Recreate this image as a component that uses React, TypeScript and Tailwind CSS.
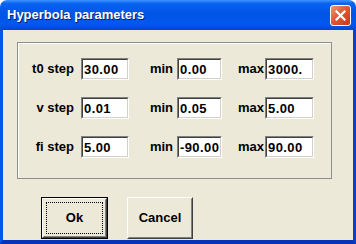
const rows = [
  { label: "t0 step", step: "30.00", min: "0.00", max: "3000." },
  { label: "v step", step: "0.01", min: "0.05", max: "5.00" },
  { label: "fi step", step: "5.00", min: "-90.00", max: "90.00" },
];

function Field({ value, w, ml }: { value: string; w: string; ml: string }) {
  return (
    <div
      className={`${w} ${ml} h-[22px] border border-t-[#808080] border-l-[#808080] border-b-white border-r-white`}
    >
      <div className="h-full border border-t-[#404040] border-l-[#404040] border-b-[#d4d0c8] border-r-[#d4d0c8] bg-white pl-[1px] flex items-center overflow-hidden whitespace-nowrap text-[13px] font-bold tracking-[0.4px] text-black leading-none">
        {value}
      </div>
    </div>
  );
}

export default function App() {
  return (
    <div className="w-[356px] h-[244px] bg-white flex flex-col font-['Liberation_Sans',Arial,sans-serif]">
      {/* Title bar */}
      <div className="h-[30px] shrink-0 rounded-t-[7px] bg-[linear-gradient(to_bottom,#3D95FF_0%,#0A62F2_12%,#0055E5_45%,#0058EE_80%,#0047D6_100%)] flex items-center pl-[7px] pr-[5px]">
        <span className="text-white font-bold text-[13px] [text-shadow:1px_1px_0_#0A1E6E] flex-1">
          Hyperbola parameters
        </span>
        <div className="w-[21px] h-[21px] rounded-[3px] border border-white bg-[linear-gradient(135deg,#EC9A7E_0%,#DD5A36_45%,#C23A1B_100%)] flex items-center justify-center">
          <svg width="11" height="11" viewBox="0 0 11 11">
            <path d="M1.5 1.5 L9.5 9.5 M9.5 1.5 L1.5 9.5" stroke="white" strokeWidth="2.2" strokeLinecap="square" />
          </svg>
        </div>
      </div>

      {/* Frame + client */}
      <div className="flex-1 flex flex-col border-l-[3px] border-r-[3px] border-b-[4px] border-l-[#0654E8] border-r-[#0A3FC8] border-b-[#0833B8]">
        <div className="flex-1 bg-[#ECE9D8] pl-[14px] pt-[12px] flex flex-col">
          {/* Group box */}
          <div className="w-[315px] h-[137px] border border-[#8E8F8F] shadow-[inset_1px_1px_0_#fff] pt-[15px] flex flex-col gap-[17px] text-[13px] font-bold text-black">
            {rows.map((r) => (
              <div key={r.label} className="flex items-center h-[22px]">
                <span className="w-[56px] text-right">{r.label}</span>
                <Field value={r.step} w="w-[48px]" ml="ml-[7px]" />
                <span className="w-[44px] text-right">min</span>
                <Field value={r.min} w="w-[45px]" ml="ml-[4px]" />
                <span className="w-[42px] text-right">max</span>
                <Field value={r.max} w="w-[49px]" ml="ml-[1px]" />
              </div>
            ))}
          </div>

          {/* Buttons */}
          <div className="flex pl-[24px] pt-[18px] gap-[19px] text-[13px] font-bold text-black">
            <button className="w-[67px] h-[42px] border border-black bg-[#ECE9D8] p-0">
              <div className="h-full border border-t-white border-l-white border-b-[#404040] border-r-[#404040]">
                <div className="h-full border border-t-[#ECE9D8] border-l-[#ECE9D8] border-b-[#808080] border-r-[#808080] p-[2px]">
                  <div className="h-full border border-dotted border-black flex items-center justify-center">
                    Ok
                  </div>
                </div>
              </div>
            </button>
            <button className="w-[66px] h-[42px] border border-t-white border-l-white border-b-[#404040] border-r-[#404040] bg-[#ECE9D8] p-0">
              <div className="h-full border border-t-[#ECE9D8] border-l-[#ECE9D8] border-b-[#808080] border-r-[#808080] flex items-center justify-center">
                Cancel
              </div>
            </button>
          </div>
        </div>
      </div>
    </div>
  );
}
